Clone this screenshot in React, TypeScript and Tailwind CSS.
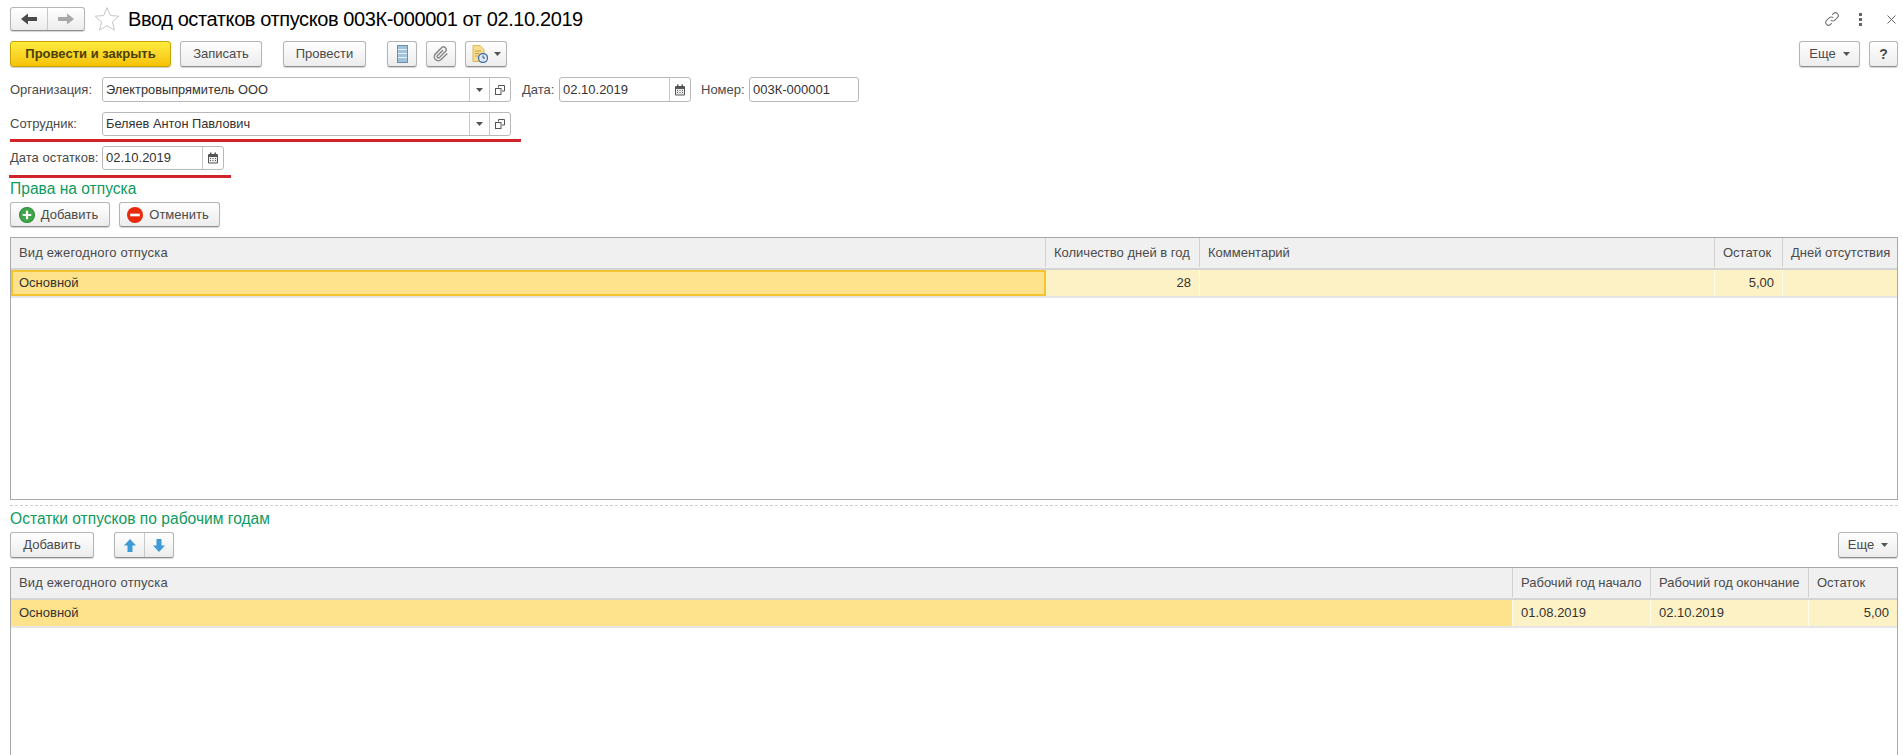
import { ReactNode } from "react";

const btn =
  "flex items-center justify-center rounded-[3px] border border-[#b5b5b5] border-b-[#8f8f8f] bg-gradient-to-b from-white to-[#ececec] text-[13px] text-[#4a4a4a] shadow-[0_1px_1px_rgba(0,0,0,0.18)]";

const inputBox = "flex h-full items-center rounded-[3px] border border-[#b8b8b8] bg-white text-[13px] text-[#333]";

const Caret = () => (
  <svg width="7" height="4" viewBox="0 0 7 4">
    <path d="M0 0h7L3.5 4z" fill="#555" />
  </svg>
);

const OpenIcon = () => (
  <svg width="10" height="10" viewBox="0 0 10 10" fill="none" stroke="#555">
    <path d="M3.500 2.500V.5h6v5.500H7" />
    <rect x="0.5" y="3.500" width="5.500" height="6" fill="#fff" />
  </svg>
);

const CalendarIcon = () => (
  <svg width="12" height="12" viewBox="0 0 12 12">
    <rect x="1" y="2" width="10" height="9.5" rx="1" fill="#555" />
    <rect x="3" y="0.5" width="1.5" height="2.5" fill="#555" />
    <rect x="7.5" y="0.5" width="1.5" height="2.5" fill="#555" />
    <path d="M2 5h8v5.5H2z" fill="#eee" />
    <path d="M3 6h1v1H3zM5.5 6h1v1h-1zM8 6h1v1H8zM3 8h1v1H3zM5.5 8h1v1h-1zM8 8h1v1H8z" fill="#555" />
  </svg>
);

const Label = ({ w, children }: { w: string; children: ReactNode }) => (
  <span className={`${w} shrink-0 text-[13px] whitespace-nowrap text-[#4a4a4a]`}>{children}</span>
);

const RefField = ({ value }: { value: string }) => (
  <div className={`${inputBox} w-[409px]`}>
    <span className="flex-1 pl-[3px] text-[12.8px]">{value}</span>
    <span className="flex h-full w-[20px] items-center justify-center border-l border-[#c8c8c8]">
      <Caret />
    </span>
    <span className="flex h-full w-[21px] items-center justify-center border-l border-[#c8c8c8]">
      <OpenIcon />
    </span>
  </div>
);

const DateField = ({ value, w }: { value: string; w: string }) => (
  <div className={`${inputBox} ${w}`}>
    <span className="flex-1 pl-[3px]">{value}</span>
    <span className="flex h-full w-[21px] items-center justify-center border-l border-[#c8c8c8]">
      <CalendarIcon />
    </span>
  </div>
);

const SectionTitle = ({ children }: { children: ReactNode }) => (
  <div className="flex h-[20px] items-center text-[15.6px] leading-none text-[#0f9a60]">{children}</div>
);

type Col = { title: string; value: string; width: string; right?: boolean; bg: string; focus?: boolean };

const Grid = ({ cols, className }: { cols: Col[]; className: string }) => (
  <div className={`${className} border border-[#a8a8a8] bg-white text-[13px]`}>
    <div className="flex h-[32px] border-b-2 border-[#d4d4d4] bg-[#f0f0f0] pb-[1px] text-[#4a4a4a]">
      {cols.map((c, i) => (
        <div
          key={c.title}
          className={`${c.width} ${i === 0 ? "tracking-[0.18px]" : ""} flex items-center border-r border-[#d0d0d0] pl-[8px] whitespace-nowrap last:border-r-0`}
        >
          {c.title}
        </div>
      ))}
    </div>
    <div className="flex h-[28px] border-b-2 border-[#e6e6e6] text-[#333]">
      {cols.map((c) => (
        <div
          key={c.title}
          className={`${c.width} ${c.bg} ${c.focus ? "border-2 border-[#f4c430]" : "border-r border-[#fffbe8]"} ${
            c.right ? "justify-end pr-[8px]" : c.focus ? "pl-[6px]" : "pl-[8px]"
          } flex items-center whitespace-nowrap last:border-r-0`}
        >
          {c.value}
        </div>
      ))}
    </div>
  </div>
);

const topCols: Col[] = [
  { title: "Вид ежегодного отпуска", value: "Основной", width: "w-[1035px]", bg: "bg-[#fee28c]", focus: true },
  { title: "Количество дней в год", value: "28", width: "w-[154px]", right: true, bg: "bg-[#fdf2c5]" },
  { title: "Комментарий", value: "", width: "w-[515px]", bg: "bg-[#fdf2c5]" },
  { title: "Остаток", value: "5,00", width: "w-[68px]", right: true, bg: "bg-[#fdf2c5]" },
  { title: "Дней отсутствия", value: "", width: "flex-1", bg: "bg-[#fdf2c5]" },
];

const bottomCols: Col[] = [
  { title: "Вид ежегодного отпуска", value: "Основной", width: "w-[1502px]", bg: "bg-[#fee28c]" },
  { title: "Рабочий год начало", value: "01.08.2019", width: "w-[138px]", bg: "bg-[#fdf2c5]" },
  { title: "Рабочий год окончание", value: "02.10.2019", width: "w-[158px]", bg: "bg-[#fdf2c5]" },
  { title: "Остаток", value: "5,00", width: "flex-1", right: true, bg: "bg-[#fdf2c5]" },
];

export default function App() {
  return (
    <div className="h-[755px] w-[1903px] overflow-hidden bg-white pt-[7px] pr-[5px] pl-[10px] font-['Liberation_Sans',Arial,sans-serif]">
      {/* title row */}
      <div className="flex h-[24px] items-center">
        <div className={`${btn} h-full w-[75px]`}>
          <span className="flex h-full flex-1 items-center justify-center border-r border-[#c8c8c8]">
            <svg width="16" height="12" viewBox="0 0 16 12">
              <path d="M0 6l7-5.5V4h9v4H7v3.500z" fill="#4a4a4a" />
            </svg>
          </span>
          <span className="flex h-full flex-1 items-center justify-center">
            <svg width="16" height="12" viewBox="0 0 16 12">
              <path d="M16 6L9 .5V4H0v4h9v3.500z" fill="#a8a8a8" />
            </svg>
          </span>
        </div>
        <svg className="ml-[9px]" width="26" height="26" viewBox="0 0 24 24" fill="#fff" stroke="#c4c4c4" strokeWidth="0.9">
          <path d="M12 1.500l3.100 7.300 7.900.6-6 5.200 1.900 7.700L12 18.200l-6.900 4.100L7 14.600 1 9.400l7.900-.6z" />
        </svg>
        <h1 className="ml-[8px] text-[20px] font-normal tracking-[-0.4px] text-black">Ввод остатков отпусков 003К-000001 от 02.10.2019</h1>
        <div className="ml-auto flex items-center">
          <svg width="16" height="16" viewBox="0 0 16 16" fill="none" stroke="#777" strokeWidth="1.1">
            <path d="M6.800 9.200a2.800 2.800 0 0 0 4 0l2.600-2.600a2.800 2.800 0 0 0-4-4L8.200 3.800" />
            <path d="M9.200 6.800a2.800 2.800 0 0 0-4 0L2.600 9.400a2.800 2.800 0 0 0 4 4l1.200-1.200" />
          </svg>
          <span className="ml-[19px] flex flex-col gap-[2px]">
            <span className="size-[3px] bg-[#666]" />
            <span className="size-[3px] bg-[#666]" />
            <span className="size-[3px] bg-[#666]" />
          </span>
          <svg className="mr-[2px] ml-[25px]" width="9" height="9" viewBox="0 0 9 9" stroke="#666">
            <path d="M.5.5l8 8M8.500.5l-8 8" />
          </svg>
        </div>
      </div>

      {/* command bar */}
      <div className="mt-[10px] flex h-[26px]">
        <button className="flex w-[161px] items-center justify-center rounded-[3px] border border-[#c9a400] bg-gradient-to-b from-[#ffec3d] to-[#f5c200] text-[13px] font-bold text-[#4a3f00] shadow-[0_1px_1px_rgba(0,0,0,0.2)]">
          Провести и закрыть
        </button>
        <button className={`${btn} ml-[9px] w-[82px]`}>Записать</button>
        <button className={`${btn} ml-[21px] w-[83px]`}>Провести</button>
        <button className={`${btn} ml-[21px] w-[30px]`}>
          <svg width="11" height="18" viewBox="0 0 11 18">
            <rect x="0.500" y="0.500" width="10" height="17" fill="#9fc3dd" stroke="#6f8fa8" />
            <path d="M1 4.500h9M1 8.500h9M1 12.500h9" stroke="#eaf2f8" />
          </svg>
        </button>
        <button className={`${btn} ml-[9px] w-[30px]`}>
          <svg width="16" height="16" viewBox="0 0 24 24" fill="none" stroke="#888" strokeWidth="2.200">
            <path d="M21.400 11.100l-9.200 9.200a6 6 0 0 1-8.500-8.500l9.200-9.200a4 4 0 0 1 5.700 5.700l-9.200 9.200a2 2 0 0 1-2.800-2.800l8.500-8.500" />
          </svg>
        </button>
        <button className={`${btn} ml-[9px] w-[42px] gap-[6px]`}>
          <svg width="16" height="18" viewBox="0 0 16 18">
            <path d="M1 .5h7l4 4v12H1z" fill="#f6dd8f" stroke="#d8b65a" />
            <path d="M3 6h6M3 8.500h4M3 11h3" stroke="#c9a040" />
            <circle cx="11" cy="13" r="4.500" fill="#dfe9f5" stroke="#4a6fa5" strokeWidth="1.300" />
            <path d="M11 10.500V13h2" stroke="#34507d" fill="none" />
          </svg>
          <Caret />
        </button>
        <button className={`${btn} ml-auto w-[61px] gap-[7px]`}>
          Еще <Caret />
        </button>
        <button className={`${btn} ml-[9px] w-[29px] text-[14px] font-bold`}>?</button>
      </div>

      {/* header fields */}
      <div className="mt-[10px] flex h-[25px] items-center">
        <Label w="w-[92px]">Организация:</Label>
        <RefField value="Электровыпрямитель ООО" />
        <span className="ml-[11px] w-[37px] text-[13px] text-[#4a4a4a]">Дата:</span>
        <DateField value="02.10.2019" w="w-[132px]" />
        <span className="ml-[10px] w-[48px] text-[13px] text-[#4a4a4a]">Номер:</span>
        <div className={`${inputBox} w-[110px] pl-[3px]`}>003К-000001</div>
      </div>
      <div className="mt-[10px] flex h-[24px] items-center">
        <Label w="w-[92px]">Сотрудник:</Label>
        <RefField value="Беляев Антон Павлович" />
      </div>
      <div className="mt-[3px] h-[3px] w-[511px] bg-[#d2232a]" />
      <div className="mt-[4px] flex h-[24px] items-center">
        <Label w="w-[92px]">Дата остатков:</Label>
        <DateField value="02.10.2019" w="w-[122px]" />
      </div>
      <div className="mt-[5px] -ml-px h-[3px] w-[222px] bg-[#d2232a]" />

      <div className="mt-[1px]">
        <SectionTitle>Права на отпуска</SectionTitle>
      </div>
      <div className="mt-[3px] flex h-[25px]">
        <button className={`${btn} w-[100px] gap-[6px] pr-[3px]`}>
          <svg width="16" height="16" viewBox="0 0 15 15">
            <circle cx="7.500" cy="7.500" r="7" fill="#3fa64a" stroke="#2c8a38" />
            <path d="M7.500 3.500v8M3.500 7.500h8" stroke="#fff" strokeWidth="2" />
          </svg>
          Добавить
        </button>
        <button className={`${btn} ml-[9px] w-[101px] gap-[6px] pr-[3px]`}>
          <svg width="16" height="16" viewBox="0 0 15 15">
            <circle cx="7.500" cy="7.500" r="7.500" fill="#e8290b" />
            <path d="M3 7.500h9" stroke="#fff" strokeWidth="2.500" />
          </svg>
          Отменить
        </button>
      </div>

      <Grid cols={topCols} className="mt-[10px] h-[263px]" />

      <div className="mt-[5px] border-t border-dashed border-[#cfcfcf]" />
      <div className="mt-[3px]">
        <SectionTitle>Остатки отпусков по рабочим годам</SectionTitle>
      </div>
      <div className="mt-[3px] flex h-[26px]">
        <button className={`${btn} w-[84px]`}>Добавить</button>
        <div className={`${btn} ml-[20px] w-[60px]`}>
          <span className="flex h-full w-[30px] items-center justify-center border-r border-[#c8c8c8]">
            <svg width="12" height="13" viewBox="0 0 12 13">
              <path d="M6 0l6 6.500H8.500V13h-5V6.500H0z" fill="#3d9bd8" />
            </svg>
          </span>
          <span className="flex h-full flex-1 items-center justify-center">
            <svg width="12" height="13" viewBox="0 0 12 13">
              <path d="M6 13L0 6.500h3.500V0h5v6.500H12z" fill="#3d9bd8" />
            </svg>
          </span>
        </div>
        <button className={`${btn} ml-auto w-[60px] gap-[7px]`}>
          Еще <Caret />
        </button>
      </div>

      <Grid cols={bottomCols} className="mt-[9px] h-[300px]" />
    </div>
  );
}
